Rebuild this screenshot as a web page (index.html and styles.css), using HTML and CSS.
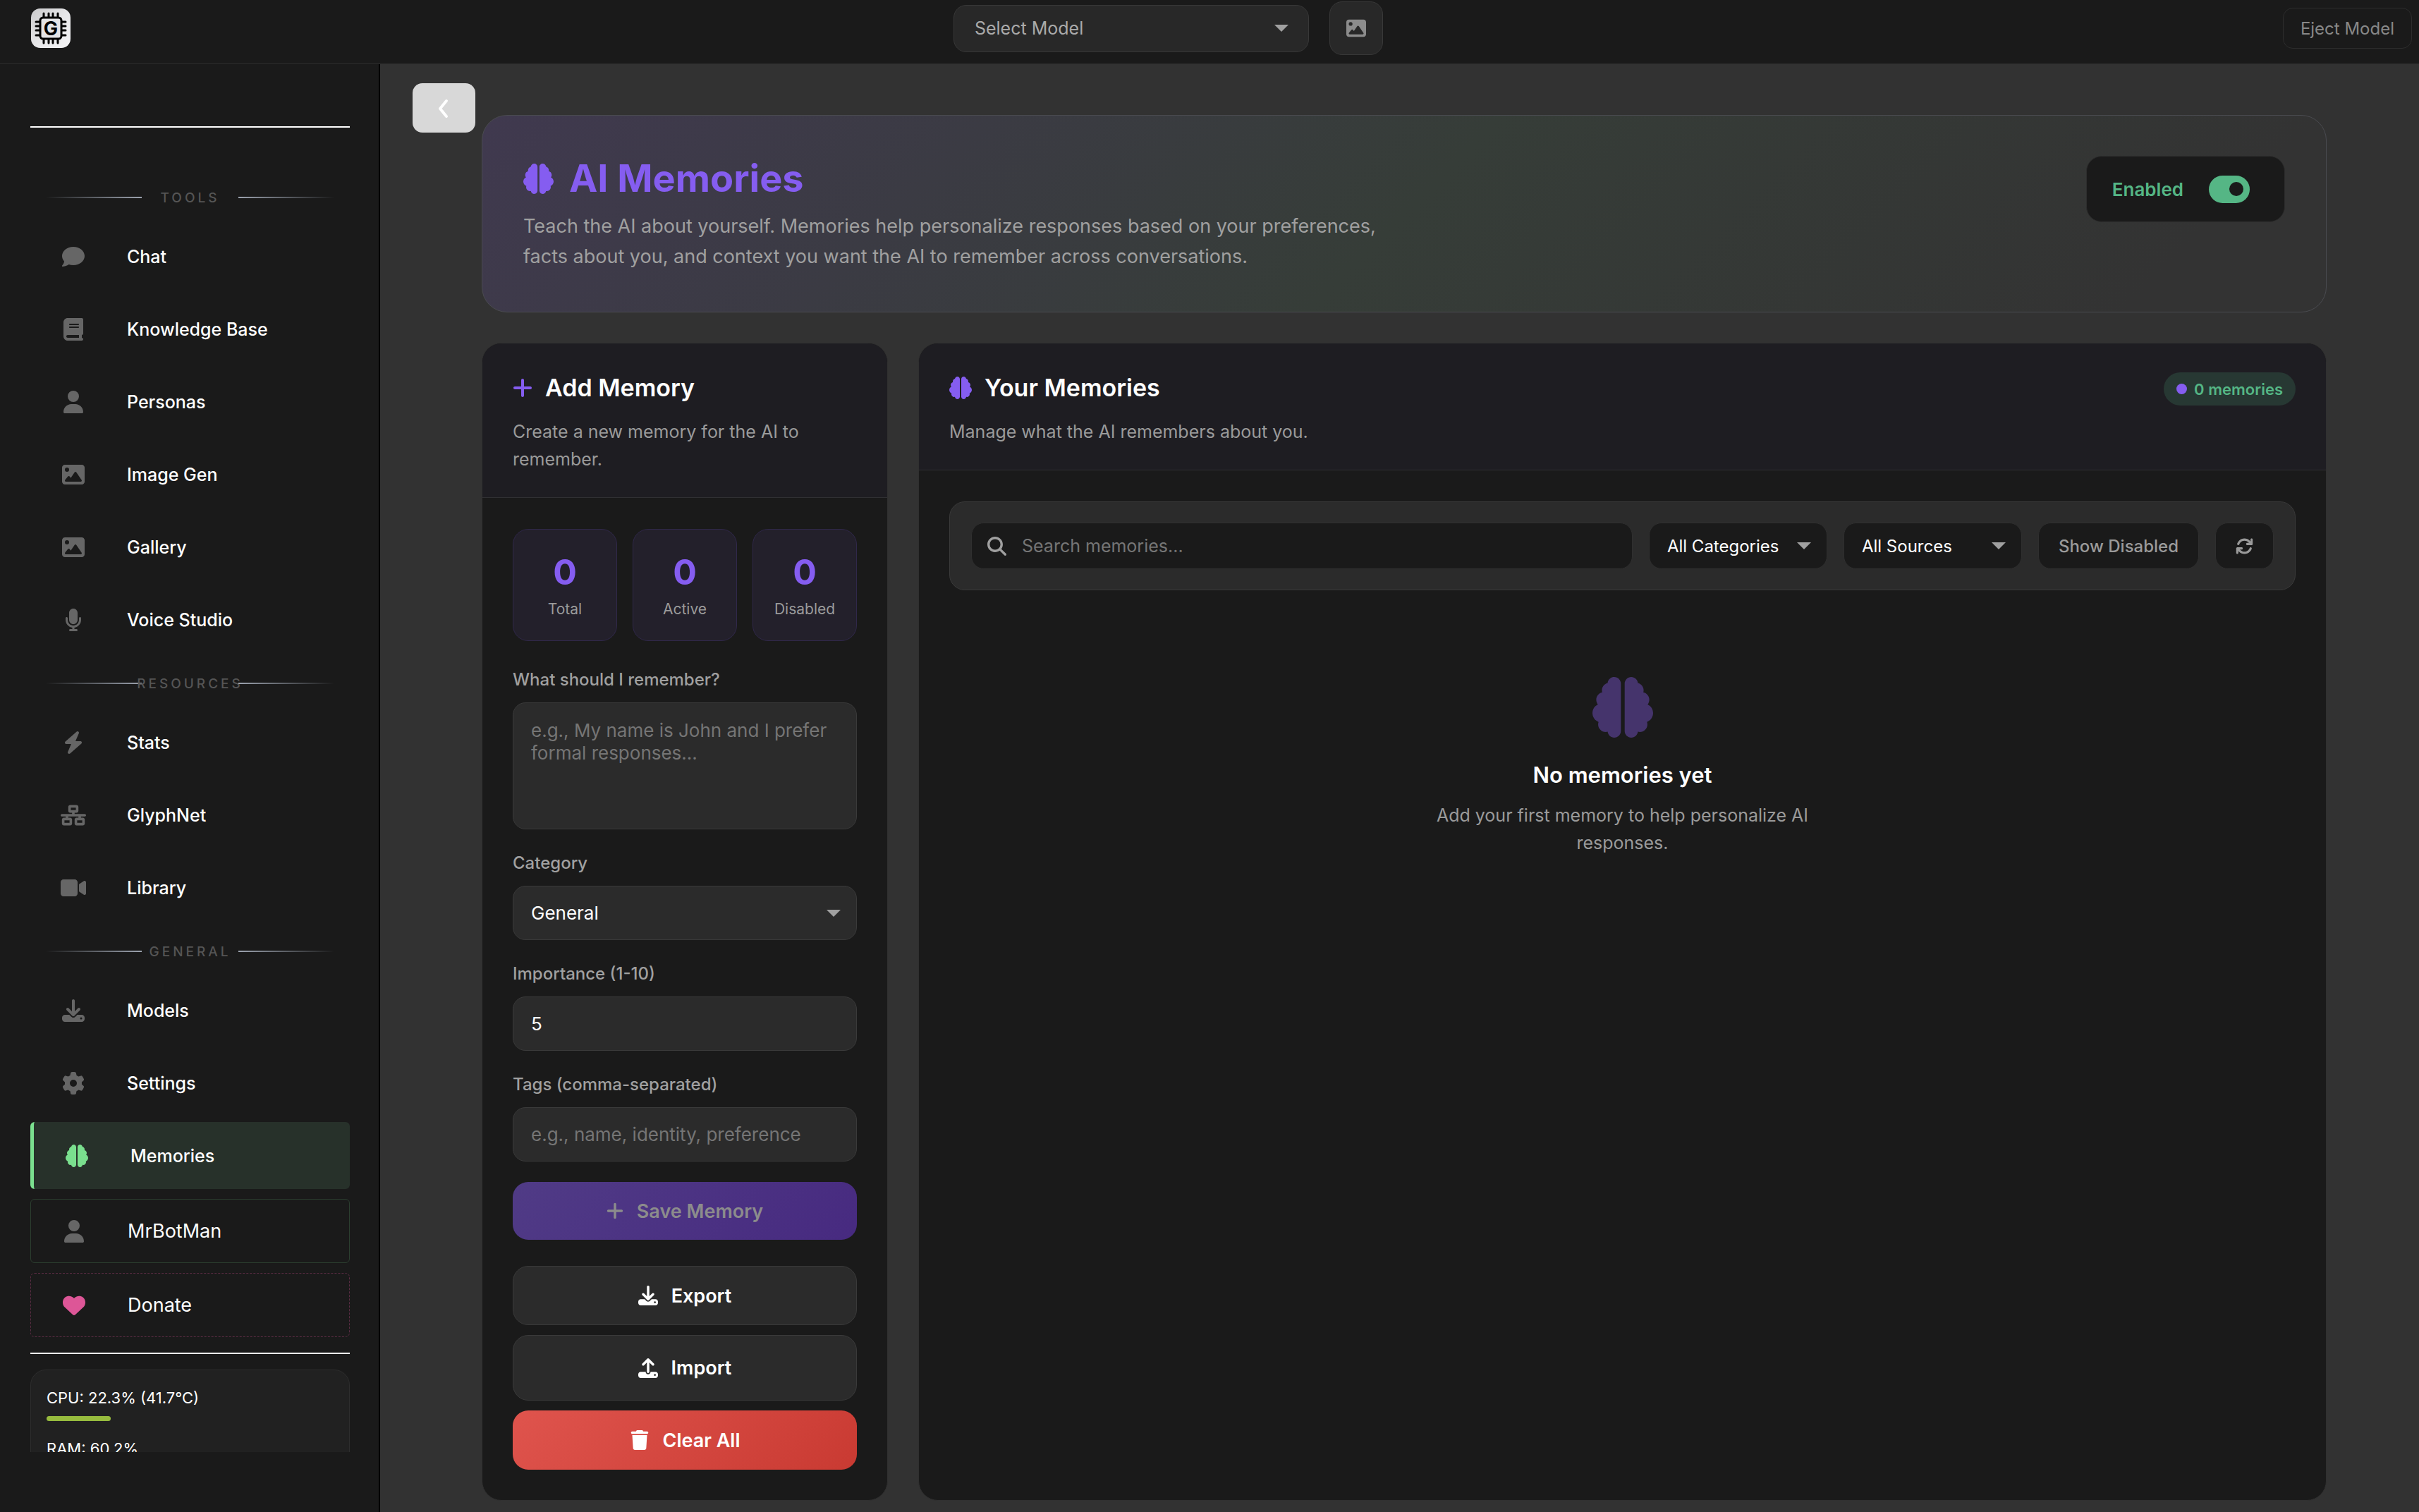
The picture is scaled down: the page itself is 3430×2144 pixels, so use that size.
FILE: index.html
```html
<!DOCTYPE html>
<html lang="en">
<head>
    <meta charset="UTF-8">
    <meta name="viewport" content="width=device-width, initial-scale=1.0">
    <title>AI Memories</title>
    <link rel="stylesheet" href="styles.css">
</head>
<body>
    <!-- icon sprite -->
    <svg class="sprite" aria-hidden="true">
        <symbol id="i-comment" viewBox="0 0 512 512"><path d="M512 240c0 114.900-114.600 208-256 208c-37.100 0-72.300-6.400-104.100-17.900c-11.900 8.700-31.300 20.600-54.300 30.600C73.600 471.100 44.700 480 16 480c-6.500 0-12.300-3.900-14.800-9.900c-2.500-6-1.100-12.800 3.400-17.400c4.100-5 15.700-17.500 21.600-29c10-16.600 19.500-38.400 21.400-62.900C17.700 326.800 0 285.100 0 240C0 125.100 114.600 32 256 32s256 93.100 256 208z"/></symbol>
        <symbol id="i-book" viewBox="0 0 448 512"><path d="M96 0C43 0 0 43 0 96V416c0 53 43 96 96 96H384h32c17.700 0 32-14.300 32-32s-14.300-32-32-32V384c17.700 0 32-14.300 32-32V32c0-17.700-14.300-32-32-32H384 96zm0 384H352v64H96c-17.700 0-32-14.300-32-32s14.300-32 32-32zm32-240c0-8.800 7.200-16 16-16H336c8.800 0 16 7.200 16 16s-7.200 16-16 16H144c-8.800 0-16-7.200-16-16zm16 48H336c8.800 0 16 7.200 16 16s-7.200 16-16 16H144c-8.800 0-16-7.200-16-16s7.200-16 16-16z"/></symbol>
        <symbol id="i-user" viewBox="0 0 448 512"><path d="M224 256A128 128 0 1 0 224 0a128 128 0 1 0 0 256zm-45.700 48C79.800 304 0 383.800 0 482.300C0 498.700 13.300 512 29.700 512H418.300c16.400 0 29.700-13.300 29.700-29.700C448 383.800 368.200 304 269.700 304H178.300z"/></symbol>
        <symbol id="i-image" viewBox="0 0 512 512"><path d="M0 96C0 60.700 28.700 32 64 32H448c35.300 0 64 28.700 64 64V416c0 35.300-28.700 64-64 64H64c-35.300 0-64-28.700-64-64V96zM323.800 202.500c-4.500-6.600-11.900-10.500-19.800-10.500s-15.400 3.900-19.800 10.500l-87 127.600L170.700 297c-4.600-5.700-11.500-9-18.700-9s-14.200 3.300-18.700 9l-64 80c-5.800 7.200-6.900 17.100-2.900 25.400s12.400 13.600 21.600 13.600h96 32H424c8.900 0 17.100-4.900 21.200-12.800s3.600-17.400-1.400-24.700l-120-176zM112 192a48 48 0 1 0 0-96 48 48 0 1 0 0 96z"/></symbol>
        <symbol id="i-mic" viewBox="0 0 384 512"><path d="M192 0C139 0 96 43 96 96V256c0 53 43 96 96 96s96-43 96-96V96c0-53-43-96-96-96zM64 216c0-13.300-10.700-24-24-24s-24 10.700-24 24v40c0 89.100 66.200 162.700 152 174.400V464H120c-13.300 0-24 10.700-24 24s10.700 24 24 24h72 72c13.300 0 24-10.700 24-24s-10.700-24-24-24H216V430.400c85.800-11.700 152-85.300 152-174.400V216c0-13.300-10.700-24-24-24s-24 10.700-24 24v40c0 70.700-57.300 128-128 128s-128-57.300-128-128V216z"/></symbol>
        <symbol id="i-bolt" viewBox="0 0 448 512"><path d="M349.400 44.600c5.900-13.700 1.500-29.700-10.600-38.500s-28.600-8-39.900 1.800l-256 224C33 240.600 29.400 254.500 34 266.900S50.800 288 64 288H175.500L98.600 467.400c-5.900 13.700-1.500 29.700 10.600 38.500s28.600 8 39.900-1.800l256-224c10-8.800 13.600-22.600 9-34.900S397.200 224 384 224H272.500L349.400 44.600z"/></symbol>
        <symbol id="i-network" viewBox="0 0 640 512"><path d="M256 64H384v64H256V64zM240 0c-26.500 0-48 21.500-48 48v96c0 26.500 21.500 48 48 48h48v32H32c-17.700 0-32 14.300-32 32s14.300 32 32 32h96v32H80c-26.500 0-48 21.500-48 48v96c0 26.500 21.500 48 48 48H240c26.500 0 48-21.500 48-48V368c0-26.500-21.500-48-48-48H192V288H448v32H400c-26.500 0-48 21.500-48 48v96c0 26.500 21.500 48 48 48H560c26.500 0 48-21.500 48-48V368c0-26.500-21.500-48-48-48H512V288h96c17.700 0 32-14.300 32-32s-14.300-32-32-32H352V192h48c26.500 0 48-21.500 48-48V48c0-26.500-21.500-48-48-48H240zM96 448V384H224v64H96zm320-64H544v64H416V384z"/></symbol>
        <symbol id="i-video" viewBox="0 0 576 512"><path d="M0 128C0 92.700 28.700 64 64 64H320c35.300 0 64 28.700 64 64V384c0 35.300-28.700 64-64 64H64c-35.300 0-64-28.700-64-64V128zM559.100 99.800c10.400 5.600 16.900 16.400 16.900 28.200V384c0 11.800-6.500 22.600-16.900 28.200s-23 5-32.900-1.600l-96-64L416 337.100V320 192 174.900l14.200-9.500 96-64c9.800-6.500 22.400-7.200 32.900-1.600z"/></symbol>
        <symbol id="i-download" viewBox="0 0 512 512"><path d="M288 32c0-17.700-14.300-32-32-32s-32 14.300-32 32V274.700l-73.400-73.400c-12.500-12.500-32.800-12.500-45.300 0s-12.500 32.800 0 45.300l128 128c12.500 12.500 32.800 12.500 45.300 0l128-128c12.500-12.500 12.500-32.800 0-45.300s-32.800-12.500-45.300 0L288 274.700V32zM64 352c-35.300 0-64 28.700-64 64v32c0 35.300 28.700 64 64 64H448c35.300 0 64-28.700 64-64V416c0-35.300-28.700-64-64-64H346.500l-45.300 45.300c-25 25-65.500 25-90.500 0L165.500 352H64zm368 56a24 24 0 1 1 0 48 24 24 0 1 1 0-48z"/></symbol>
        <symbol id="i-upload" viewBox="0 0 512 512"><path d="M288 109.300V352c0 17.700-14.300 32-32 32s-32-14.300-32-32V109.300l-73.400 73.400c-12.500 12.500-32.800 12.500-45.300 0s-12.500-32.800 0-45.300l128-128c12.500-12.500 32.800-12.500 45.300 0l128 128c12.500 12.500 12.500 32.800 0 45.300s-32.800 12.500-45.300 0L288 109.300zM64 352H192c0 35.300 28.700 64 64 64s64-28.700 64-64H448c35.300 0 64 28.700 64 64v32c0 35.300-28.700 64-64 64H64c-35.300 0-64-28.700-64-64V416c0-35.300 28.700-64 64-64zM432 456a24 24 0 1 0 0-48 24 24 0 1 0 0 48z"/></symbol>
        <symbol id="i-gear" viewBox="0 0 512 512"><path d="M495.900 166.600c3.200 8.700 .5 18.400-6.400 24.600l-43.300 39.400c1.100 8.300 1.700 16.800 1.700 25.400s-.6 17.100-1.700 25.400l43.300 39.400c6.900 6.200 9.600 15.900 6.400 24.600c-4.400 11.900-9.700 23.300-15.800 34.300l-4.700 8.100c-6.600 11-14 21.400-22.100 31.200c-5.900 7.200-15.700 9.600-24.500 6.800l-55.700-17.700c-13.400 10.300-28.200 18.900-44 25.400l-12.500 57.100c-2 9.100-9 16.300-18.200 17.800c-13.800 2.300-28 3.500-42.500 3.500s-28.700-1.200-42.500-3.500c-9.200-1.500-16.200-8.700-18.200-17.800l-12.500-57.100c-15.800-6.500-30.600-15.100-44-25.400L83.100 425.900c-8.800 2.800-18.600 .3-24.500-6.800c-8.100-9.800-15.500-20.200-22.100-31.200l-4.700-8.100c-6.100-11-11.400-22.400-15.800-34.300c-3.200-8.700-.5-18.400 6.400-24.600l43.300-39.400C64.600 273.100 64 264.600 64 256s.6-17.100 1.700-25.400L22.400 191.200c-6.900-6.200-9.600-15.900-6.400-24.600c4.400-11.900 9.700-23.300 15.800-34.300l4.700-8.100c6.600-11 14-21.400 22.100-31.200c5.900-7.200 15.700-9.600 24.500-6.800l55.700 17.700c13.400-10.300 28.200-18.900 44-25.400l12.500-57.100c2-9.100 9-16.300 18.200-17.800C227.300 1.200 241.500 0 256 0s28.700 1.200 42.500 3.500c9.200 1.500 16.200 8.700 18.200 17.800l12.500 57.100c15.800 6.500 30.600 15.100 44 25.400l55.700-17.700c8.800-2.800 18.600-.3 24.500 6.800c8.100 9.800 15.500 20.200 22.100 31.200l4.700 8.100c6.100 11 11.400 22.400 15.800 34.300zM256 336a80 80 0 1 0 0-160 80 80 0 1 0 0 160z"/></symbol>
        <symbol id="i-brain" viewBox="0 0 512 512"><path d="M184 0c30.900 0 56 25.100 56 56V456c0 30.900-25.100 56-56 56c-28.900 0-52.700-21.900-55.700-50.100c-5.200 1.400-10.700 2.100-16.300 2.100c-35.300 0-64-28.700-64-64c0-7.400 1.300-14.600 3.600-21.200C21.400 367.400 0 338.200 0 304c0-31.900 18.700-59.500 45.800-72.300C37.100 220.800 32 207 32 192c0-30.700 21.600-56.300 50.400-62.600C80.800 123.900 80 118 80 112c0-29.900 20.600-55.100 48.300-62.100C131.300 21.900 155.100 0 184 0zM328 0c28.900 0 52.600 21.900 55.700 49.900c27.800 7 48.300 32.100 48.300 62.100c0 6-.8 11.900-2.400 17.400c28.800 6.200 50.400 31.900 50.400 62.600c0 15-5.100 28.800-13.800 39.700C493.300 244.500 512 272.100 512 304c0 34.200-21.400 63.400-51.600 74.800c2.300 6.600 3.600 13.800 3.600 21.200c0 35.300-28.700 64-64 64c-5.600 0-11.100-.7-16.300-2.100c-3 28.200-26.800 50.100-55.700 50.100c-30.900 0-56-25.100-56-56V56c0-30.900 25.100-56 56-56z"/></symbol>
        <symbol id="i-heart" viewBox="0 0 512 512"><path d="M47.600 300.400L228.300 469.100c7.500 7 17.400 10.900 27.700 10.900s20.200-3.900 27.700-10.900L464.400 300.400c30.400-28.300 47.600-68 47.600-109.500v-5.800c0-69.900-50.500-129.500-119.400-141C347 36.500 300.600 51.400 268 84L256 96 244 84c-32.600-32.600-79-47.500-124.600-39.900C50.500 55.600 0 115.200 0 185.100v5.800c0 41.500 17.200 81.200 47.600 109.500z"/></symbol>
        <symbol id="i-plus" viewBox="0 0 448 512"><path d="M256 80c0-17.700-14.300-32-32-32s-32 14.300-32 32V224H48c-17.700 0-32 14.300-32 32s14.300 32 32 32H192V432c0 17.700 14.300 32 32 32s32-14.300 32-32V288H400c17.700 0 32-14.300 32-32s-14.300-32-32-32H256V80z"/></symbol>
        <symbol id="i-trash" viewBox="0 0 448 512"><path d="M135.200 17.700L128 32H32C14.300 32 0 46.300 0 64S14.300 96 32 96H416c17.700 0 32-14.300 32-32s-14.300-32-32-32H320l-7.200-14.300C307.400 6.800 296.300 0 284.200 0H163.800c-12.100 0-23.200 6.800-28.600 17.700zM416 128H32L53.200 467c1.600 25.300 22.600 45 47.900 45H346.900c25.300 0 46.300-19.700 47.900-45L416 128z"/></symbol>
        <symbol id="i-search" viewBox="0 0 512 512"><path d="M416 208c0 45.900-14.900 88.300-40 122.700L502.600 457.400c12.500 12.500 12.500 32.800 0 45.300s-32.800 12.500-45.300 0L330.700 376c-34.400 25.200-76.800 40-122.700 40C93.100 416 0 322.900 0 208S93.100 0 208 0S416 93.100 416 208zM208 352a144 144 0 1 0 0-288 144 144 0 1 0 0 288z"/></symbol>
        <symbol id="i-refresh" viewBox="0 0 512 512"><path d="M105.100 202.600c7.700-21.800 20.200-42.300 37.800-59.800c62.500-62.500 163.800-62.500 226.300 0L386.300 160H336c-17.700 0-32 14.300-32 32s14.300 32 32 32H463.900c17.700 0 32-14.300 32-32V64c0-17.700-14.300-32-32-32s-32 14.300-32 32v51.200L414.400 97.600c-87.500-87.500-229.300-87.500-316.800 0C73.200 122 55.600 150.700 44.800 181.400c-5.900 16.700 2.900 34.900 19.500 40.800s34.900-2.900 40.800-19.500zM39 289.300c-5 1.500-9.800 4.200-13.700 8.200c-4 4-6.700 8.800-8.100 14c-.3 1.200-.6 2.500-.8 3.800c-.3 1.700-.4 3.400-.4 5.100V448c0 17.700 14.300 32 32 32s32-14.300 32-32V396.900l17.600 17.500c87.500 87.400 229.300 87.400 316.700 0c24.400-24.400 42.100-53.100 52.900-83.700c5.900-16.700-2.900-34.900-19.500-40.800s-34.900 2.900-40.800 19.500c-7.700 21.800-20.200 42.300-37.800 59.800c-62.500 62.500-163.800 62.500-226.300 0L125.600 352H176c17.700 0 32-14.300 32-32s-14.300-32-32-32H48.400c-1.600 0-3.200 .1-4.800 .3s-3.100 .5-4.600 1z"/></symbol>
    </svg>

    <header class="topbar">
        <svg class="logo" viewBox="0 0 56 56" role="img" aria-label="Logo">
            <defs>
                <linearGradient id="logo-bg" x1="0" y1="0" x2="1" y2="1">
                    <stop offset="0" stop-color="#c9c9cb"/>
                    <stop offset="0.5" stop-color="#e6e6e8"/>
                    <stop offset="1" stop-color="#f4f4f6"/>
                </linearGradient>
            </defs>
            <rect width="56" height="56" rx="13" fill="url(#logo-bg)"/>
            <path d="M18 7v42M25 7v42M31 7v42M38 7v42M7 19h42M7 25h42M7 31h42M7 38h42" stroke="#000" stroke-width="3" stroke-linecap="round"/>
            <rect x="13" y="13" width="30" height="30" rx="4" fill="#e4e4e6" stroke="#000" stroke-width="3"/>
            <text class="logo-text" x="28" y="38" text-anchor="middle">G</text>
        </svg>
        <div class="model-picker">
            <select class="select model-select" aria-label="Select Model">
                <option>Select Model</option>
            </select>
            <button class="image-btn" aria-label="Vision model"><svg class="icon"><use href="#i-image"/></svg></button>
        </div>
        <button class="eject-btn" disabled>Eject Model</button>
    </header>

    <div class="layout">
        <aside class="sidebar">
            <div class="sidebar-scroll">
                <hr class="rule rule-top">
                <nav>
                    <div class="section-title section-first"><span>TOOLS</span></div>
                    <a href="#" class="nav-item"><svg class="icon"><use href="#i-comment"/></svg>Chat</a>
                    <a href="#" class="nav-item"><svg class="icon"><use href="#i-book"/></svg>Knowledge Base</a>
                    <a href="#" class="nav-item"><svg class="icon"><use href="#i-user"/></svg>Personas</a>
                    <a href="#" class="nav-item"><svg class="icon"><use href="#i-image"/></svg>Image Gen</a>
                    <a href="#" class="nav-item"><svg class="icon"><use href="#i-image"/></svg>Gallery</a>
                    <a href="#" class="nav-item"><svg class="icon"><use href="#i-mic"/></svg>Voice Studio</a>

                    <div class="section-title"><span>RESOURCES</span></div>
                    <a href="#" class="nav-item"><svg class="icon"><use href="#i-bolt"/></svg>Stats</a>
                    <a href="#" class="nav-item"><svg class="icon"><use href="#i-network"/></svg>GlyphNet</a>
                    <a href="#" class="nav-item"><svg class="icon"><use href="#i-video"/></svg>Library</a>

                    <div class="section-title"><span>GENERAL</span></div>
                    <a href="#" class="nav-item"><svg class="icon"><use href="#i-download"/></svg>Models</a>
                    <a href="#" class="nav-item"><svg class="icon"><use href="#i-gear"/></svg>Settings</a>
                    <a href="#" class="nav-item active"><svg class="icon"><use href="#i-brain"/></svg>Memories</a>
                </nav>
                <button class="nav-item nav-box user-box"><svg class="icon"><use href="#i-user"/></svg>MrBotMan</button>
                <button class="nav-item nav-box donate-box"><svg class="icon"><use href="#i-heart"/></svg>Donate</button>
                <hr class="rule">
                <div class="sys-stats">
                    <div class="sys-row">CPU: 22.3% (41.7°C)</div>
                    <div class="sys-bar"><div class="sys-fill" style="width: 22.3%"></div></div>
                    <div class="sys-row">RAM: 60.2%</div>
                    <div class="sys-bar"><div class="sys-fill" style="width: 60.2%"></div></div>
                </div>
            </div>
        </aside>

        <main class="main">
            <button class="collapse-btn" aria-label="Collapse sidebar">
                <svg viewBox="0 0 18 28"><path d="M12 3L3 14l9 11" fill="none" stroke="#fff" stroke-width="4" stroke-linecap="round" stroke-linejoin="round"/></svg>
            </button>

            <section class="hero">
                <div>
                    <h1><svg class="icon"><use href="#i-brain"/></svg>AI Memories</h1>
                    <p>Teach the AI about yourself. Memories help personalize responses based on your preferences, facts about you, and context you want the AI to remember across conversations.</p>
                </div>
                <div class="toggle-card">
                    <label for="memories-enabled">Enabled</label>
                    <input type="checkbox" class="switch" id="memories-enabled" checked>
                </div>
            </section>

            <div class="columns">
                <section class="card">
                    <div class="card-header">
                        <h2><svg class="icon icon-plus"><use href="#i-plus"/></svg>Add Memory</h2>
                        <p>Create a new memory for the AI to remember.</p>
                    </div>
                    <div class="card-body">
                        <div class="stats">
                            <div class="stat"><strong>0</strong><span>Total</span></div>
                            <div class="stat"><strong>0</strong><span>Active</span></div>
                            <div class="stat"><strong>0</strong><span>Disabled</span></div>
                        </div>
                        <form>
                            <div class="field">
                                <label for="content">What should I remember?</label>
                                <textarea id="content" class="input" placeholder="e.g., My name is John and I prefer formal responses..."></textarea>
                            </div>
                            <div class="field">
                                <label for="category">Category</label>
                                <select id="category" class="input select">
                                    <option>General</option>
                                </select>
                            </div>
                            <div class="field">
                                <label for="importance">Importance (1-10)</label>
                                <input type="number" id="importance" class="input" min="1" max="10" value="5">
                            </div>
                            <div class="field">
                                <label for="tags">Tags (comma-separated)</label>
                                <input type="text" id="tags" class="input" placeholder="e.g., name, identity, preference">
                            </div>
                            <button class="btn btn-save" disabled><svg class="icon icon-plus"><use href="#i-plus"/></svg>Save Memory</button>
                        </form>
                        <div class="actions">
                            <button class="btn"><svg class="icon"><use href="#i-download"/></svg>Export</button>
                            <button class="btn btn-import"><svg class="icon"><use href="#i-upload"/></svg>Import</button>
                            <button class="btn btn-danger"><svg class="icon"><use href="#i-trash"/></svg>Clear All</button>
                        </div>
                    </div>
                </section>

                <section class="card">
                    <div class="card-header header-row">
                        <div>
                            <h2><svg class="icon"><use href="#i-brain"/></svg>Your Memories</h2>
                            <p>Manage what the AI remembers about you.</p>
                        </div>
                        <span class="badge">0 memories</span>
                    </div>
                    <div class="card-body">
                        <div class="toolbar">
                            <label class="search">
                                <svg class="icon"><use href="#i-search"/></svg>
                                <input type="text" placeholder="Search memories..." aria-label="Search memories">
                            </label>
                            <select class="select filter" aria-label="Category filter">
                                <option>All Categories</option>
                            </select>
                            <select class="select filter" aria-label="Source filter">
                                <option>All Sources</option>
                            </select>
                            <button class="tool-btn">Show Disabled</button>
                            <button class="tool-btn" aria-label="Refresh"><svg class="icon"><use href="#i-refresh"/></svg></button>
                        </div>
                        <div class="empty">
                            <svg class="icon"><use href="#i-brain"/></svg>
                            <h3>No memories yet</h3>
                            <p>Add your first memory to help personalize AI responses.</p>
                        </div>
                    </div>
                </section>
            </div>
        </main>
    </div>
</body>
</html>
```
FILE: styles.css
```css
* {
    margin: 0;
    padding: 0;
    box-sizing: border-box;
}

body {
    font-family: Inter, 'Liberation Sans', sans-serif;
    font-size: 24px;
    background: #1a1a1a;
    color: #fff;
    height: 100vh;
    display: flex;
    flex-direction: column;
    overflow: hidden;
}

button, input, select, textarea {
    font: inherit;
    color: inherit;
    outline: none;
}

a {
    color: inherit;
    text-decoration: none;
}

.sprite {
    display: none;
}

.icon {
    width: 28px;
    height: 28px;
    fill: currentColor;
    flex-shrink: 0;
}

/* top bar */
.topbar {
    height: 91px;
    padding: 0 10px 10px 44px;
    border-bottom: 1px solid #2d2d2d;
    display: flex;
    justify-content: space-between;
    align-items: center;
    flex-shrink: 0;
}

.logo {
    width: 56px;
    height: 56px;
}

.logo-text {
    font-size: 27px;
    font-weight: 700;
}

.model-picker {
    display: flex;
    align-items: center;
    gap: 29px;
}

.select {
    appearance: none;
    background-image: url("data:image/svg+xml,%3Csvg xmlns='http://www.w3.org/2000/svg' viewBox='0 0 20 10'%3E%3Cpath d='M0 0h20L10 10z' fill='%23a0a0a0'/%3E%3C/svg%3E");
    background-repeat: no-repeat;
    background-size: 20px 10px;
    background-position: right 22px center;
}

.model-select {
    width: 504px;
    height: 67px;
    padding: 0 29px;
    background-color: #282828;
    background-position: right 28px center;
    border: 1px solid #383838;
    border-radius: 18px;
    font-size: 25px;
    color: #aaa;
}

.image-btn {
    width: 76px;
    height: 76px;
    background: #282828;
    border: 1px solid #383838;
    border-radius: 18px;
    color: #8c8c8c;
    display: flex;
    align-items: center;
    justify-content: center;
}

.eject-btn {
    height: 58px;
    padding: 0 24px;
    margin-left: 24px;
    background: none;
    border: 1px solid #2d2d2d;
    border-radius: 14px;
    color: #888;
}

.layout {
    display: flex;
    flex: 1;
    min-height: 0;
}

/* sidebar */
.sidebar {
    width: 539px;
    padding: 88px 41px 85px 43px;
    border-right: 2px solid #000;
    flex-shrink: 0;
}

.sidebar-scroll {
    height: 100%;
    overflow: hidden;
}

.rule {
    border: none;
    height: 2px;
    background: #fff;
    margin: 22px 0;
}

.rule-top {
    margin: 0;
}

.section-title {
    height: 22px;
    padding: 0 22px;
    margin: 32px 0 25px;
    display: flex;
    align-items: center;
    font-size: 19px;
    font-weight: 500;
    letter-spacing: 4px;
    color: #555;
}

.section-first {
    margin: 88px 0 25px;
}

.section-title span {
    width: 137px;
    display: flex;
    justify-content: center;
}

.section-title::before,
.section-title::after {
    content: '';
    flex: 1;
    height: 2px;
    background: linear-gradient(to right, transparent, #9ca3af);
}

.section-title::after {
    background: linear-gradient(to left, transparent, #9ca3af);
}

.nav-item {
    width: 100%;
    height: 95px;
    padding-left: 43px;
    margin-bottom: 8px;
    border-radius: 6px;
    display: flex;
    align-items: center;
    gap: 58px;
    font-size: 25px;
    font-weight: 500;
    text-align: left;
}

.nav-item .icon {
    width: 36px;
    height: 32px;
    color: #666;
}

.nav-item.active {
    background: #27312a;
    border-left: 5px solid #7be08f;
    margin-bottom: 14px;
}

.nav-item.active .icon {
    color: #7adf8e;
}

.nav-box {
    height: 91px;
    margin-bottom: 14px;
    background: none;
    font-size: 27px;
    font-weight: 400;
}

.user-box {
    border: 1px solid #2b3e2f;
}

.donate-box {
    border: 1px dashed #5a2c43;
}

.donate-box .icon {
    color: #dd5697;
}

.sys-stats {
    padding: 24px 22px;
    background: #212121;
    border: 1px solid #2d2d2d;
    border-radius: 22px;
}

.sys-row {
    font-size: 22px;
    font-weight: 400;
    line-height: 30px;
}

.sys-bar {
    height: 7px;
    margin: 11px 0 24px;
}

.sys-fill {
    height: 7px;
    border-radius: 4px;
    background: #97bb3e;
}

/* main */
.main {
    flex: 1;
    position: relative;
    background: #323232;
    padding: 72px 131px 16px 144px;
    display: flex;
    flex-direction: column;
    gap: 43px;
}

.collapse-btn {
    position: absolute;
    top: 27px;
    left: 46px;
    width: 89px;
    height: 70px;
    background: #d8d8d8;
    border: none;
    border-radius: 14px;
}

.collapse-btn svg {
    width: 18px;
    height: 28px;
    vertical-align: middle;
}

.hero {
    padding: 57px 58px;
    background: linear-gradient(135deg, #40394f 0%, #363d38 50%, #333 90%);
    border: 1px solid #4a4b50;
    border-radius: 36px;
    display: flex;
    justify-content: space-between;
    align-items: flex-start;
}

.hero h1 {
    display: flex;
    align-items: center;
    gap: 22px;
    font-size: 54px;
    line-height: 64px;
    color: #855df0;
}

.hero h1 .icon {
    width: 43px;
    height: 43px;
}

.hero p {
    max-width: 1240px;
    margin-top: 14px;
    font-size: 27px;
    line-height: 43px;
    color: #a0a0a0;
}

.toggle-card {
    height: 94px;
    padding: 0 49px 0 36px;
    background: #1a1a1a;
    border: 1px solid #2d2d2d;
    border-radius: 22px;
    display: flex;
    align-items: center;
    gap: 36px;
    font-size: 26px;
    font-weight: 600;
    color: #55b685;
}

.switch {
    appearance: none;
    width: 58px;
    height: 39px;
    padding: 0 9px;
    background: #55b685;
    border-radius: 20px;
    display: flex;
    align-items: center;
    justify-content: flex-end;
}

.switch::after {
    content: '';
    width: 20px;
    height: 20px;
    border-radius: 50%;
    background: #1a1a1a;
}

.columns {
    flex: 1;
    display: grid;
    grid-template-columns: 576px 1fr;
    gap: 43px;
}

.card {
    background: #1a1a1a;
    border: 1px solid #303030;
    border-radius: 28px;
    overflow: hidden;
}

.card-header {
    padding: 41px 43px 34px;
    background: #1e1d22;
    border-bottom: 1px solid #303033;
}

.header-row {
    display: flex;
    justify-content: space-between;
    align-items: flex-start;
}

.card-header h2 {
    display: flex;
    align-items: center;
    gap: 18px;
    font-size: 34px;
    font-weight: 600;
    line-height: 44px;
}

.card-header h2 .icon {
    color: #855df0;
    width: 32px;
    height: 32px;
}

.card-header h2 .icon-plus {
    width: 28px;
}

.card-header p {
    margin-top: 21px;
    font-size: 25px;
    line-height: 39px;
    color: #9a9a9a;
}

.card-body {
    padding: 44px 43px 42px;
}

.stats {
    display: grid;
    grid-template-columns: repeat(3, 1fr);
    gap: 22px;
    margin-bottom: 41px;
}

.stat {
    height: 159px;
    padding-top: 30px;
    background: #23202b;
    border: 1px solid #30284a;
    border-radius: 22px;
    text-align: center;
}

.stat strong {
    display: block;
    font-size: 50px;
    line-height: 60px;
    color: #855df0;
}

.stat span {
    display: block;
    margin-top: 8px;
    font-size: 21px;
    line-height: 30px;
    color: #9a9a9a;
}

.field {
    margin-bottom: 34px;
}

.field:last-of-type {
    margin-bottom: 29px;
}

.field label {
    display: block;
    margin-bottom: 18px;
    font-weight: 500;
    line-height: 28px;
    color: #a0a0a0;
}

.input {
    display: block;
    width: 100%;
    height: 77px;
    padding: 0 25px;
    background-color: #2b2b2b;
    border: 1px solid #3a3a3a;
    border-radius: 18px;
    font-size: 26px;
    line-height: 32px;
    appearance: none;
}

textarea.input {
    height: 180px;
    padding: 23px 25px;
    resize: none;
}

input[type="number"]::-webkit-inner-spin-button {
    appearance: none;
}

.input::placeholder,
.search input::placeholder {
    color: #757575;
}

.btn {
    width: 100%;
    height: 84px;
    background: #2b2b2b;
    border: 1px solid #3a3a3a;
    border-radius: 22px;
    display: flex;
    align-items: center;
    justify-content: center;
    gap: 19px;
    font-size: 27px;
    font-weight: 600;
}

.btn .icon-plus {
    width: 24px;
}

.btn-save {
    height: 82px;
    border: none;
    background: linear-gradient(135deg, #503b86, #472a80);
    color: #8c8c8c;
}

.btn-import {
    height: 93px;
}

.btn-danger {
    border: none;
    background: linear-gradient(135deg, #df544d, #c93a32);
}

.actions {
    margin-top: 37px;
    display: flex;
    flex-direction: column;
    gap: 14px;
}

.badge {
    height: 47px;
    padding: 0 18px;
    border-radius: 24px;
    background: #273833;
    display: flex;
    align-items: center;
    gap: 10px;
    font-size: 22px;
    font-weight: 600;
    color: #55b685;
}

.badge::before {
    content: '';
    width: 15px;
    height: 15px;
    border-radius: 50%;
    background: #855df0;
}

/* toolbar */
.toolbar {
    padding: 29px 30px;
    background: #2b2b2b;
    border: 1px solid #3a3a3a;
    border-radius: 22px;
    display: flex;
    gap: 23px;
}

.search,
.filter,
.tool-btn {
    height: 66px;
    background-color: #1a1a1a;
    border: 1px solid #2f2f2f;
    border-radius: 18px;
}

.search {
    flex: 1;
    padding: 0 22px;
    display: flex;
    align-items: center;
    gap: 22px;
}

.search .icon {
    width: 27px;
    height: 27px;
    color: #a0a0a0;
}

.search input {
    flex: 1;
    min-width: 0;
    background: none;
    border: none;
    font-size: 25px;
}

.filter {
    width: 253px;
    padding: 0 25px;
}

.tool-btn {
    padding: 0 28px;
    font-weight: 500;
    color: #9a9a9a;
    display: flex;
    align-items: center;
}

.tool-btn .icon {
    width: 25px;
    height: 25px;
}

/* empty state */
.empty {
    padding-top: 123px;
    display: flex;
    flex-direction: column;
    align-items: center;
    text-align: center;
}

.empty .icon {
    width: 86px;
    height: 86px;
    color: #45346c;
}

.empty h3 {
    margin-top: 33px;
    font-size: 31px;
    font-weight: 600;
    line-height: 40px;
}

.empty p {
    max-width: 560px;
    margin-top: 18px;
    font-size: 25px;
    line-height: 39px;
    color: #9a9a9a;
}
```
